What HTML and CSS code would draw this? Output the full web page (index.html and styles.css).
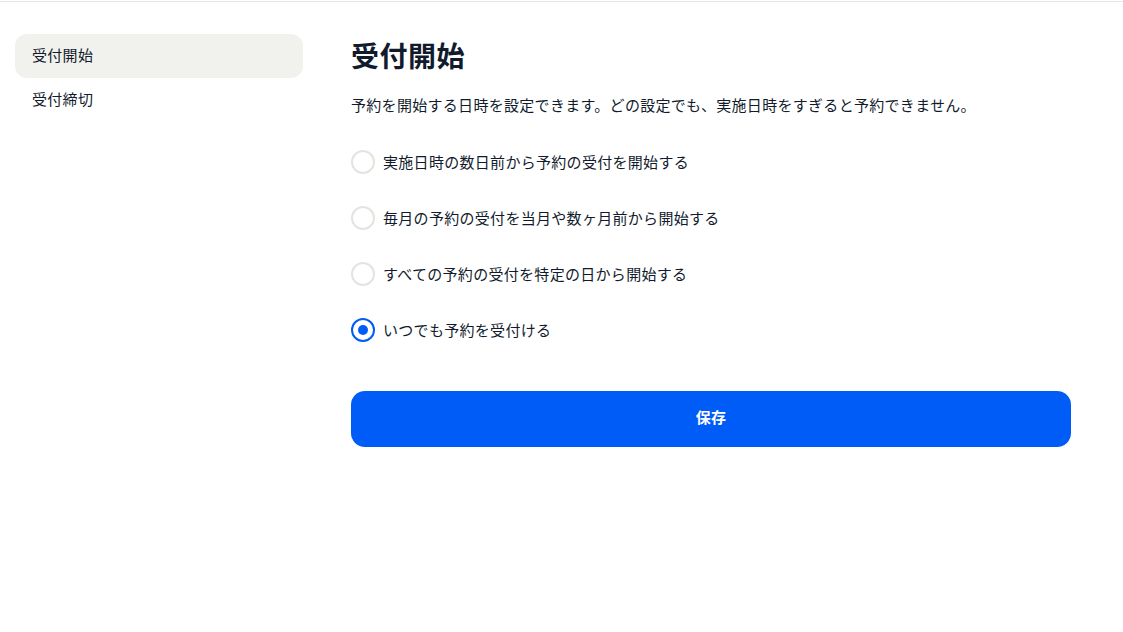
FILE: index.html
```html
<!DOCTYPE html>
<html lang="ja">
<head>
  <meta charset="UTF-8">
  <meta name="viewport" content="width=device-width, initial-scale=1.0">
  <title>受付開始</title>
  <link rel="stylesheet" href="styles.css">
</head>
<body>

  <div class="page">
      <nav class="sidebar">
          <a class="nav-item active" href="#">受付開始</a>
          <a class="nav-item" href="#">受付締切</a>
      </nav>

      <main class="content">
          <h1>受付開始</h1>
          <p class="desc">予約を開始する日時を設定できます。どの設定でも、実施日時をすぎると予約できません。</p>

          <form class="options">
              <label class="option">
                  <input type="radio" name="start" value="days">
                  <span class="radio"></span>
                  <span class="option-text">実施日時の数日前から予約の受付を開始する</span>
              </label>
              <label class="option">
                  <input type="radio" name="start" value="monthly">
                  <span class="radio"></span>
                  <span class="option-text">毎月の予約の受付を当月や数ヶ月前から開始する</span>
              </label>
              <label class="option">
                  <input type="radio" name="start" value="date">
                  <span class="radio"></span>
                  <span class="option-text">すべての予約の受付を特定の日から開始する</span>
              </label>
              <label class="option">
                  <input type="radio" name="start" value="always" checked>
                  <span class="radio"></span>
                  <span class="option-text">いつでも予約を受付ける</span>
              </label>

              <button type="button" class="save-button">保存</button>
          </form>
      </main>
  </div>

</body>
</html>
```

FILE: styles.css
```css
body {
  font-family: "Noto Sans CJK JP", "Noto Sans", sans-serif;
  background-color: #ffffff;
  color: #111b2c;
  margin: 0;
  padding: 0;
  letter-spacing: 0.3px;
}

.page {
  margin-top: 1px;
  border-top: 1px solid #e6e6e6;
  display: flex;
  gap: 48px;
  padding: 32px 0 0 15px;
  height: 598px;
}

.sidebar {
  width: 288px;
  display: flex;
  flex-direction: column;
}

.nav-item {
  display: flex;
  align-items: center;
  height: 44px;
  padding: 0 17px 3px;
  box-sizing: border-box;
  font-size: 15px;
  color: #111b2c;
  text-decoration: none;
  border-radius: 12px;
}

.nav-item.active {
  background: #f1f1ed;
}

.content {
  width: 720px;
}

h1 {
  font-size: 28px;
  line-height: 36px;
  font-weight: bold;
  letter-spacing: 0.5px;
  margin: 3px 0 21px;
}

.desc {
  font-size: 15px;
  line-height: 22px;
  margin: 0 0 34px;
}

.options {
  display: flex;
  flex-direction: column;
  gap: 32px;
}

.option {
  display: flex;
  align-items: center;
  gap: 8px;
  height: 24px;
  font-size: 15px;
  cursor: pointer;
}

.option-text {
  padding-bottom: 2px;
}

.option input {
  display: none;
}

.radio {
  box-sizing: border-box;
  flex-shrink: 0;
  width: 24px;
  height: 24px;
  border: 2px solid #e3e3e0;
  border-radius: 50%;
  display: flex;
  align-items: center;
  justify-content: center;
}

.option input:checked + .radio {
  border-color: #005cf6;
}

.option input:checked + .radio::after {
  content: "";
  width: 10px;
  height: 10px;
  border-radius: 50%;
  background: #005cf6;
}

.save-button {
  margin-top: 17px;
  height: 56px;
  width: 100%;
  padding: 0 0 5px;
  border: none;
  border-radius: 14px;
  background: #005cf6;
  color: #fff;
  font-family: inherit;
  font-size: 15px;
  font-weight: bold;
  letter-spacing: 0.3px;
  cursor: pointer;
}

.save-button:hover {
  background: #0050d8;
}
```
